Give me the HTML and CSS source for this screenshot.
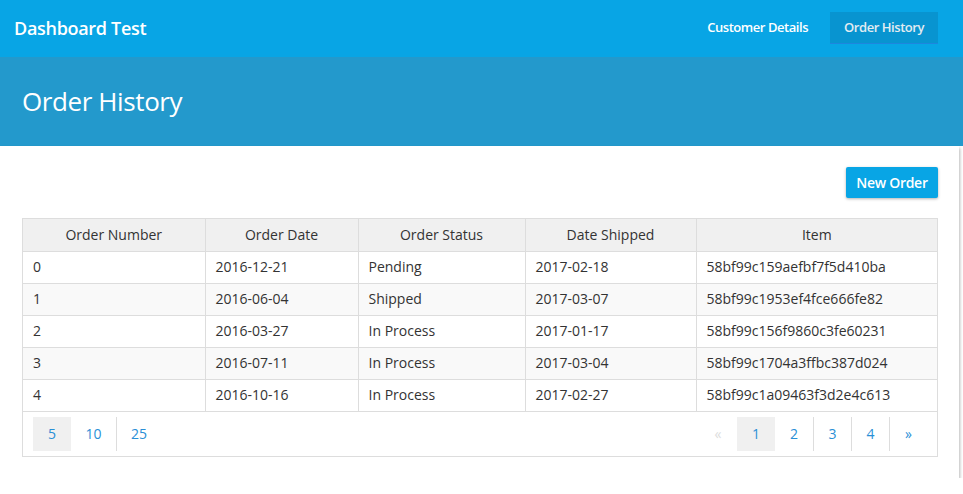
FILE: index.html
```html
<!DOCTYPE html>
<html>
<head>
<meta charset="utf-8">
<link rel="stylesheet" href="styles.css">
</head>
<body>
<nav class="navbar">
  <div class="brand">Dashboard Test</div>
  <ul class="nav">
    <li><a class="nav-link">Customer Details</a></li>
    <li><a class="nav-link active">Order History</a></li>
  </ul>
</nav>
<header class="page-head">
  <h1>Order History</h1>
</header>
<main class="card">
  <div class="toolbar">
    <button class="btn-primary">New Order</button>
  </div>
  <div class="table-wrap">
    <table class="grid">
      <thead>
        <tr>
          <th class="c1">Order Number</th>
          <th class="c2">Order Date</th>
          <th class="c3">Order Status</th>
          <th class="c4">Date Shipped</th>
          <th class="c5">Item</th>
        </tr>
      </thead>
      <tbody>
        <tr><td>0</td><td>2016-12-21</td><td>Pending</td><td>2017-02-18</td><td>58bf99c159aefbf7f5d410ba</td></tr>
        <tr><td>1</td><td>2016-06-04</td><td>Shipped</td><td>2017-03-07</td><td>58bf99c1953ef4fce666fe82</td></tr>
        <tr><td>2</td><td>2016-03-27</td><td>In Process</td><td>2017-01-17</td><td>58bf99c156f9860c3fe60231</td></tr>
        <tr><td>3</td><td>2016-07-11</td><td>In Process</td><td>2017-03-04</td><td>58bf99c1704a3ffbc387d024</td></tr>
        <tr><td>4</td><td>2016-10-16</td><td>In Process</td><td>2017-02-27</td><td>58bf99c1a09463f3d2e4c613</td></tr>
      </tbody>
    </table>
    <div class="table-foot">
      <div class="pager sizes">
        <a class="pg active">5</a>
        <a class="pg wide">10</a>
        <a class="pg wide sep">25</a>
      </div>
      <div class="pager pages">
        <a class="pg disabled">&laquo;</a>
        <a class="pg active">1</a>
        <a class="pg">2</a>
        <a class="pg sep">3</a>
        <a class="pg sep">4</a>
        <a class="pg sep">&raquo;</a>
      </div>
    </div>
  </div>
</main>
</body>
</html>
```
FILE: styles.css
```css
* { box-sizing: border-box; }
html, body { margin: 0; padding: 0; background: #fff; }
body {
  font-family: "Open Sans", "Liberation Sans", sans-serif;
  font-size: 14px;
  color: #333;
}
.navbar {
  height: 57px;
  background: #08a5e5;
  display: flex;
  align-items: center;
  justify-content: space-between;
  padding: 0 25px 0 14px;
}
.brand {
  color: #fff;
  font-size: 18px;
  font-weight: 600;
  letter-spacing: -0.3px;
  margin-top: -1px;
}
.nav {
  list-style: none;
  margin: 0;
  padding: 0;
  display: flex;
  align-items: center;
  gap: 8px;
  margin-top: -2px;
}
.nav-link {
  display: block;
  color: #fff;
  font-size: 13px;
  font-weight: 600;
  letter-spacing: -0.45px;
  padding: 6px 14px 7px 14px;
  height: 32px;
  line-height: 18px;
}
.nav-link.active {
  background: #0894d0;
  color: #e3ecf2;
  border-bottom: 1px solid #1d86de;
}
.page-head {
  height: 89px;
  background: #2399cc;
  display: flex;
  align-items: center;
  padding: 0 22px;
}
.page-head h1 {
  margin: 0;
  color: #fff;
  font-size: 26px;
  font-weight: 400;
  letter-spacing: -0.4px;
  margin-top: -2px;
}
.card {
  width: 959px;
  background: #fff;
  padding: 21px 21px 21px 22px;
  box-shadow: 1px 2px 3px rgba(0,0,0,0.28);
}
.toolbar {
  display: flex;
  justify-content: flex-end;
  margin-bottom: 20px;
}
.btn-primary {
  font-family: inherit;
  font-size: 14px;
  font-weight: 600;
  letter-spacing: -0.3px;
  color: #fff;
  background: #08a5e5;
  border: none;
  border-radius: 2px;
  width: 92px;
  height: 31px;
  padding: 0;
  box-shadow: 0 1px 3px rgba(0,0,0,0.3);
}
.table-wrap {
  width: 916px;
  border: 1px solid #ddd;
}
.grid {
  width: 100%;
  border-collapse: collapse;
  table-layout: fixed;
}
.grid th, .grid td {
  height: 32px;
  padding: 0 10px;
  border-right: 1px solid #ddd;
  border-bottom: 1px solid #ddd;
  line-height: 18px;
  white-space: nowrap;
}
.grid th:last-child, .grid td:last-child { border-right: none; }
.grid th {
  background: #f0f0f0;
  font-weight: 400;
  text-align: center;
}
.grid td { text-align: left; }
.grid tbody tr:nth-child(even) td { background: #f9f9f9; }
.c1 { width: 182px; }
.c2 { width: 153px; }
.c3 { width: 167px; }
.c4 { width: 171px; }
.table-foot {
  height: 44px;
  display: flex;
  justify-content: space-between;
  align-items: flex-start;
  padding: 5px 10px 0 10px;
}
.pager { display: flex; }
.pg {
  display: block;
  height: 34px;
  line-height: 34px;
  width: 38px;
  text-align: center;
  color: #2a8fd6;
  font-size: 14px;
}
.pg.wide { width: 45px; }
.pg.sep { border-left: 1px solid #ddd; }
.pg.active { background: #f0f0f0; }
.pg.disabled { color: #ddd; }
```
